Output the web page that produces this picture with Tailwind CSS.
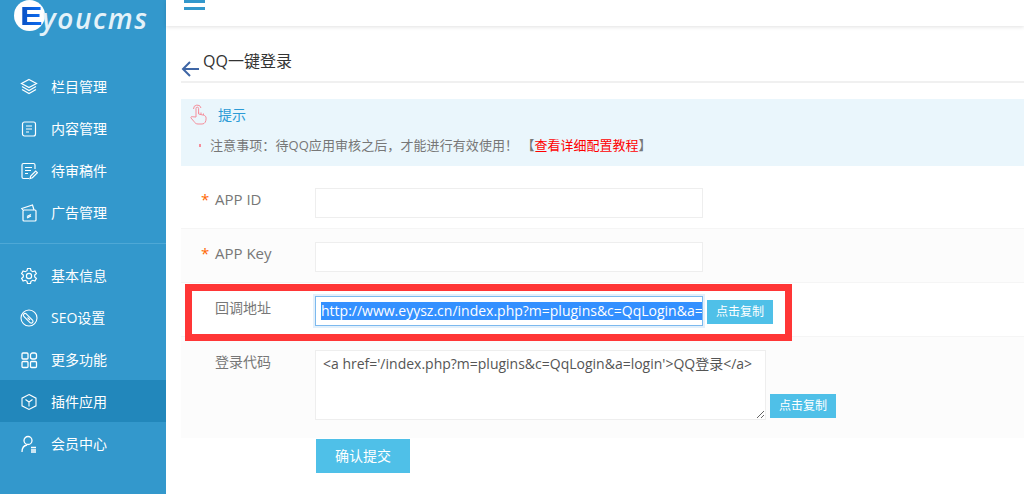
<!DOCTYPE html>
<html lang="zh-CN">
<head>
    <meta charset="UTF-8">
    <title>QQ一键登录</title>
    <script src="https://cdn.jsdelivr.net/npm/@tailwindcss/browser@4"></script>
</head>
<body class="bg-white h-[494px] w-[1024px] overflow-hidden relative font-['Open_Sans','Noto_Sans_CJK_SC',sans-serif]">
    <div class="flex h-[494px]">
        <!-- sidebar -->
        <aside class="w-[166px] shrink-0 bg-[#3398cc] text-white text-sm">
            <div class="h-[66px] relative">
                <div class="absolute left-[14px] top-0 w-[31px] h-[31px] rounded-full bg-white"></div>
                <span class="absolute left-[20px] top-[2px] text-[26px] leading-[28px] font-bold scale-x-[1.3] origin-left text-transparent bg-clip-text bg-linear-to-r from-[#0a4fc0] to-[#0d6ef5] font-['Liberation_Sans',sans-serif]">E</span>
                <span class="absolute left-[42px] top-0 text-[28px] leading-[36px] font-semibold italic text-[#e4f2f9] tracking-[1.6px] font-['Open_Sans',sans-serif]">youcms</span>
            </div>
            <nav>
                <a class="h-[42px] flex items-center pl-[20px] gap-[13px]">
                    <svg class="w-[18px] h-[18px]" viewBox="0 0 18 18" fill="none" stroke="#fff" stroke-width="1.2"><path d="M9 1.500 16.500 5.500 9 9.500 1.500 5.500Z"/><path d="M2 8.500 9 12.500 16 8.500"/><path d="M2 11.500 9 15.500 16 11.500"/></svg>
                    <span>栏目管理</span>
                </a>
                <a class="h-[42px] flex items-center pl-[20px] gap-[13px]">
                    <svg class="w-[18px] h-[18px]" viewBox="0 0 18 18" fill="none" stroke="#fff" stroke-width="1.2"><rect x="2.500" y="2" width="13" height="14" rx="2"/><path d="M6 6h6M6 9h6M6 12h3"/></svg>
                    <span>内容管理</span>
                </a>
                <a class="h-[42px] flex items-center pl-[20px] gap-[13px]">
                    <svg class="w-[18px] h-[18px]" viewBox="0 0 18 18" fill="none" stroke="#fff" stroke-width="1.2"><path d="M9 16.500H3.500a1.500 1.500 0 0 1-1.500-1.500V3a1.500 1.500 0 0 1 1.500-1.500h10A1.500 1.500 0 0 1 15 3v4"/><path d="M5 5.500h7M5 8.500h6M5 11.500h3"/><path d="M10 16.500l.7-2.500 5-5 1.700 1.700-5 5z"/></svg>
                    <span>待审稿件</span>
                </a>
                <a class="h-[42px] flex items-center pl-[20px] gap-[13px]">
                    <svg class="w-[18px] h-[18px]" viewBox="0 0 18 18" fill="none" stroke="#fff" stroke-width="1.2"><rect x="3" y="6" width="13" height="11" rx="1"/><path d="M3 6 1.800 4.500 12.500 1l1.500 5"/><path d="M7 12.500l4-2M7 14l4-2"/></svg>
                    <span>广告管理</span>
                </a>
            </nav>
            <div class="mt-[9px] mb-[10px] border-t border-[#4ea8d6]"></div>
            <nav>
                <a class="h-[42px] pt-[1px] flex items-center pl-[20px] gap-[13px]">
                    <svg class="w-[18px] h-[18px]" viewBox="0 0 18 18" fill="none" stroke="#fff" stroke-width="1.200"><path d="M7.500 1.500h3l.5 2.200 1.700 1 2.200-.7 1.500 2.600-1.700 1.500v1.800l1.700 1.500-1.500 2.600-2.200-.7-1.700 1-.5 2.200h-3l-.5-2.200-1.700-1-2.200.7-1.500-2.600 1.700-1.500V8.100L1.600 6.600l1.500-2.600 2.200.7 1.700-1z"/><circle cx="9" cy="9" r="2.600"/></svg>
                    <span>基本信息</span>
                </a>
                <a class="h-[42px] pt-[1px] flex items-center pl-[20px] gap-[13px]">
                    <svg class="w-[18px] h-[18px]" viewBox="0 0 18 18" fill="none" stroke="#fff" stroke-width="1.100"><circle cx="9" cy="9" r="8"/><path d="M6.200 4.800l6.500 6.500a1.800 1.800 0 0 1-2.500 2.500L4.200 7.800a1.800 1.800 0 0 1 2-3z"/><path d="M7.500 8.500l2.500 2.500"/></svg>
                    <span>SEO设置</span>
                </a>
                <a class="h-[42px] pt-[1px] flex items-center pl-[20px] gap-[13px]">
                    <svg class="w-[18px] h-[18px]" viewBox="0 0 18 18" fill="none" stroke="#fff" stroke-width="1.300"><rect x="2" y="2" width="6" height="6" rx="1"/><rect x="10.500" y="2" width="6" height="6" rx="2"/><rect x="2" y="10.500" width="6" height="6" rx="1"/><rect x="10.500" y="10.500" width="6" height="6" rx="1"/></svg>
                    <span>更多功能</span>
                </a>
                <a class="h-[42px] pt-[1px] flex items-center pl-[20px] gap-[13px] bg-[#2287bb]">
                    <svg class="w-[18px] h-[18px]" viewBox="0 0 18 18" fill="none" stroke="#fff" stroke-width="1.100"><path d="M9 1.500 16 5.200v7.600L9 16.500 2 12.800V5.200Z"/><path d="M5.500 6.500 9 9l3.500-2.500M9 9v4.500"/></svg>
                    <span>插件应用</span>
                </a>
                <a class="h-[42px] pt-[1px] flex items-center pl-[20px] gap-[13px]">
                    <svg class="w-[18px] h-[18px]" viewBox="0 0 18 18" fill="none" stroke="#fff" stroke-width="1.300"><circle cx="8" cy="5.500" r="4"/><path d="M2 17c0-4 2-6.500 5-7"/><path d="M11 12.500h5M11 15h5M11 17h5"/></svg>
                    <span>会员中心</span>
                </a>
            </nav>
        </aside>

        <!-- main -->
        <main class="flex-1 min-w-0">
            <div class="h-[26px] bg-white shadow-[0_1px_4px_rgba(0,0,0,0.12)] pl-[18px]">
                <div class="w-[21px] h-[10px] flex flex-col justify-between">
                    <div class="h-[3px] bg-[#3398cc]"></div>
                    <div class="h-[3px] bg-[#3398cc]"></div>
                </div>
            </div>
            <div class="pl-[15px]">
                <div class="h-[57px] border-b-2 border-[#f0f0f0] flex items-start pt-[25px] text-[#333] text-base">
                    <svg class="w-[19px] h-[19px] mt-[8px] shrink-0" viewBox="0 0 19 19" fill="none" stroke="#3f66a5" stroke-width="2"><path d="M18 10H2M9 3 2 10l7 7"/></svg>
                    <h2 class="ml-[3px] leading-[20px]">QQ一键登录</h2>
                </div>
                <div class="mt-[16px] h-[67px] bg-[#eaf6fc] relative">
                    <div class="flex items-center h-[30px] pt-[1px] pl-[9px]">
                        <svg class="w-[18px] h-[21px]" viewBox="0 0 18 21" fill="none" stroke="#f58d9a" stroke-width="1"><path d="M6 13V4.500a1.300 1.300 0 0 1 2.600 0V10l5 1.200c1.500.4 2.500 1.200 2.500 3 0 3-1 5.800-4 5.800H8c-2 0-3-1-4-2.500l-3-3.500c-.5-1 .8-2 1.800-1.200z"/><path d="M8.600 9V8M11 10.500V8.500M13.500 11V9.500"/><path d="M3.500 5A3.800 3.800 0 0 1 11 4"/></svg>
                        <span class="ml-[10px] text-sm text-[#2b9bd6]">提示</span>
                    </div>
                    <p class="pl-[29px] mt-[6px] text-[13px] leading-[20px] text-[#777] whitespace-nowrap relative">
                        <span class="absolute left-[18px] top-[9px] w-[2px] h-[3px] bg-[#f58d9a]"></span>
                        <span class="tracking-[0.08px]">注意事项：待QQ应用审核之后，才能进行有效使用！</span> 【<span class="text-[#ff0000]">查看详细配置教程</span>】
                    </p>
                </div>

                <div class="text-sm text-[#777]">
                    <div class="h-[63px] border-b border-[#f5f5f5] flex pt-[22px]">
                        <label class="w-[134px] pl-[20px] pt-[1px] flex leading-[20px] text-[15px]"><span class="w-[14px] text-[#f60]">*</span>APP ID</label>
                        <input type="text" class="w-[388px] h-[30px] border border-[#eee] bg-white">
                    </div>
                    <div class="h-[54px] border-b border-[#f5f5f5] bg-[#fcfcfc] flex pt-[13px]">
                        <label class="w-[134px] pl-[20px] pt-[1px] flex leading-[20px] text-[15px]"><span class="w-[14px] text-[#f60]">*</span>APP Key</label>
                        <input type="text" class="w-[388px] h-[30px] border border-[#eee] bg-white">
                    </div>
                    <div class="h-[54px] border-b border-[#f5f5f5] flex pt-[13px]">
                        <label class="w-[134px] pl-[34px] pt-[2px] leading-[20px]">回调地址</label>
                        <div class="w-[388px] h-[30px] border border-[#7cb9ee] ring-2 ring-[#e3f0fb] bg-white pl-[5px] flex items-center text-[#fff] overflow-hidden whitespace-nowrap">
                            <span class="bg-[#3390ff] leading-[18px] text-[14px]">http://www.eyysz.cn/index.php?m=plugins&amp;c=QqLogin&amp;a=</span>
                        </div>
                        <button class="ml-[4px] mt-[4px] w-[66px] h-[24px] bg-[#4fc0e8] text-white text-xs">点击复制</button>
                    </div>
                    <div class="h-[101px] bg-[#fcfcfc] flex pt-[13px]">
                        <label class="w-[134px] pl-[34px] pt-[2px] leading-[20px]">登录代码</label>
                        <textarea class="w-[451px] h-[70px] border border-[#eee] bg-white px-[7px] py-[3px] text-sm leading-[20px] text-[#555] resize">&lt;a href='/index.php?m=plugins&amp;c=QqLogin&amp;a=login'&gt;QQ登录&lt;/a&gt;</textarea>
                        <button class="ml-[4px] mt-[44px] w-[66px] h-[24px] bg-[#4fc0e8] text-white text-xs">点击复制</button>
                    </div>
                    <div class="pl-[135px] pt-[1px]">
                        <button class="w-[94px] h-[34px] bg-[#4fc0e8] text-white text-sm">确认提交</button>
                    </div>
                </div>
            </div>
        </main>
    </div>

    <!-- red annotation over the callback row -->
    <div class="absolute left-[185px] top-[284px] w-[607px] h-[57px] border-[7px] border-[#ff3636]"></div>
</body>
</html>
